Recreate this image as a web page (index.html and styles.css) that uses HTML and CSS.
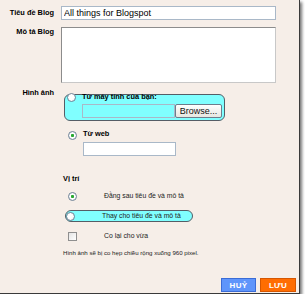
FILE: index.html
```html
<!DOCTYPE html>
<html lang="vi">
<head>
    <meta charset="UTF-8">
    <title>Tiêu đề Blog</title>
    <link rel="stylesheet" href="styles.css">
</head>
<body>

    <div class="dialog">
        <div class="row">
            <label class="label" for="blogTitle">Tiêu đề Blog</label>
            <input class="text-input title-input" type="text" id="blogTitle" value="All things for Blogspot">
        </div>

        <div class="row row-top desc-row">
            <label class="label desc-label" for="blogDesc">Mô tả Blog</label>
            <textarea class="desc-input" id="blogDesc"></textarea>
        </div>

        <div class="row row-top image-row">
            <div class="label">Hình ảnh</div>
            <div class="image-content">
                <div class="upload-box">
                    <input class="radio upload-radio" type="radio" name="source">
                    <div class="source-body">
                        <div class="source-label">Từ máy tính của bạn:</div>
                        <div class="file-row">
                            <div class="file-field"></div>
                            <button class="browse-btn">Browse...</button>
                        </div>
                    </div>
                </div>

                <div class="web-source">
                    <input class="radio web-radio" type="radio" name="source" checked>
                    <div class="source-body">
                        <div class="source-label">Từ web</div>
                        <input class="text-input url-input" type="text">
                    </div>
                </div>

                <div class="section-title">Vị trí</div>

                <div class="option">
                    <input class="radio" type="radio" name="place" checked>
                    <span class="option-text">Đằng sau tiêu đề và mô tả</span>
                </div>
                <div class="option option-active">
                    <input class="radio" type="radio" name="place">
                    <span class="option-text">Thay cho tiêu đề và mô tả</span>
                </div>
                <div class="option">
                    <input class="checkbox" type="checkbox">
                    <span class="option-text">Co lại cho vừa</span>
                </div>

                <p class="note">Hình ảnh sẽ bị co hẹp chiều rộng xuống 960 pixel.</p>
            </div>
        </div>

        <div class="footer">
            <button class="btn btn-cancel">HUỶ</button>
            <button class="btn btn-save">LƯU</button>
        </div>
    </div>

</body>
</html>
```

FILE: styles.css
```css
body {
    margin: 0;
    background-color: #ffffff;
    font-family: "Liberation Sans", Arial, sans-serif;
    color: #000;
}

.dialog {
    width: 300px;
    height: 294px;
    box-sizing: border-box;
    background-color: #f6eee8;
    border-right: 1px solid #3a3a3a;
    border-bottom: 1px solid #3a3a3a;
    box-shadow: 2px 2px 3px rgba(0, 0, 0, 0.55);
    padding: 6px 3px 1px 0;
    display: flex;
    flex-direction: column;
}

.row {
    display: flex;
    align-items: center;
}

.row-top {
    align-items: flex-start;
}

.label {
    width: 54px;
    margin-right: 7px;
    text-align: right;
    font-size: 7.4px;
    font-weight: bold;
    line-height: 10px;
    flex-shrink: 0;
}

.text-input {
    box-sizing: border-box;
    height: 14px;
    border: 1px solid #a9b8c8;
    background: #fff;
    font-family: "Liberation Sans", Arial, sans-serif;
    font-size: 9px;
    padding: 0 2px;
    margin: 0;
    outline: none;
}

.title-input {
    width: 215px;
}

.desc-row {
    margin-top: 7px;
}

.desc-label {
    padding-top: 0;
}

.desc-input {
    box-sizing: border-box;
    width: 215px;
    height: 56px;
    margin: 0;
    border: 1px solid #8c8c8c;
    border-right-color: #c8c8c8;
    border-bottom-color: #c8c8c8;
    background: #fff;
    resize: none;
    outline: none;
}

.image-row {
    margin-top: 5px;
    flex: 1;
}

.image-content {
    padding-top: 6px;
}

.radio,
.checkbox {
    appearance: none;
    -webkit-appearance: none;
    margin: 0;
    width: 9px;
    height: 9px;
    box-sizing: border-box;
    flex-shrink: 0;
}

.radio {
    border-radius: 50%;
    border: 1px solid #6f8397;
    background: radial-gradient(circle at 40% 40%, #ffffff 0, #ffffff 45%, #e2e4e8 100%);
}

.radio:checked {
    background: radial-gradient(circle, #2aa832 0, #2aa832 1.3px, #ffffff 1.9px, #ffffff 45%, #e2e4e8 100%);
}

.checkbox {
    border: 1px solid #8f8f8f;
    background: linear-gradient(135deg, #e4e4e4, #ffffff);
}

.upload-box {
    margin-left: 3px;
    width: 161px;
    height: 27px;
    box-sizing: border-box;
    background-color: #80ffff;
    border: 1.5px solid #555d66;
    border-radius: 6px;
    display: flex;
    align-items: flex-start;
}

.upload-radio {
    margin-top: -2px;
    margin-left: 2px;
}

.source-body {
    margin-left: 6px;
}

.upload-box .source-body {
    margin-left: 6px;
}

.source-label {
    font-size: 7.4px;
    font-weight: bold;
    line-height: 8px;
}

.upload-box .source-label {
    margin-top: -2px;
}

.file-row {
    display: flex;
    margin-top: 2.5px;
}

.file-field {
    width: 93px;
    height: 14px;
    box-sizing: border-box;
    border: 1px solid #a9b8c8;
    background-color: #80ffff;
}

.browse-btn {
    width: 47px;
    height: 14px;
    box-sizing: border-box;
    margin: 0;
    padding: 0;
    border: 1px solid #6d7c8c;
    border-radius: 2px;
    background: linear-gradient(#ffffff, #e6e6e0);
    font-family: "Liberation Sans", Arial, sans-serif;
    font-size: 9px;
    color: #111;
}

.web-source {
    display: flex;
    align-items: flex-start;
    margin-top: 9px;
}

.web-radio {
    margin-left: 7px;
    margin-top: 1px;
}

.url-input {
    width: 93px;
    margin-top: 2px;
}

.section-title {
    margin-top: 19px;
    margin-left: 2px;
    font-size: 7.4px;
    font-weight: bold;
    line-height: 8px;
}

.option {
    display: flex;
    align-items: center;
    height: 11px;
    margin-top: 7.5px;
    margin-left: 4px;
    padding-left: 1.5px;
    border: 1.5px solid transparent;
    box-sizing: border-box;
}

.option + .option {
    margin-top: 8.5px;
}

.option .radio,
.option .checkbox {
    margin-left: 0.5px;
}

.option-active {
    width: 128px;
    height: 12px;
    background-color: #80ffff;
    border-color: #555d66;
    border-radius: 6px;
    padding-left: 0;
}

.option-active .radio {
    margin-left: 0;
}

.option-text {
    margin-left: 27px;
    font-size: 6.85px;
    line-height: 8px;
    color: #222;
}

.note {
    margin: 7.5px 0 0 2px;
    font-size: 6.1px;
    line-height: 8px;
    color: #222;
}

.footer {
    display: flex;
    justify-content: flex-end;
    gap: 4px;
}

.btn {
    height: 14px;
    margin: 0;
    padding: 0;
    box-sizing: border-box;
    font-family: "Liberation Sans", Arial, sans-serif;
    font-size: 8px;
    font-weight: bold;
    color: #fff;
    letter-spacing: 0.3px;
}

.btn-cancel {
    width: 35px;
    background-color: #5f95fb;
    border: 1px solid #3b6cd6;
}

.btn-save {
    width: 36px;
    background-color: #ff6d02;
    border: 1px solid #d65600;
}
```
